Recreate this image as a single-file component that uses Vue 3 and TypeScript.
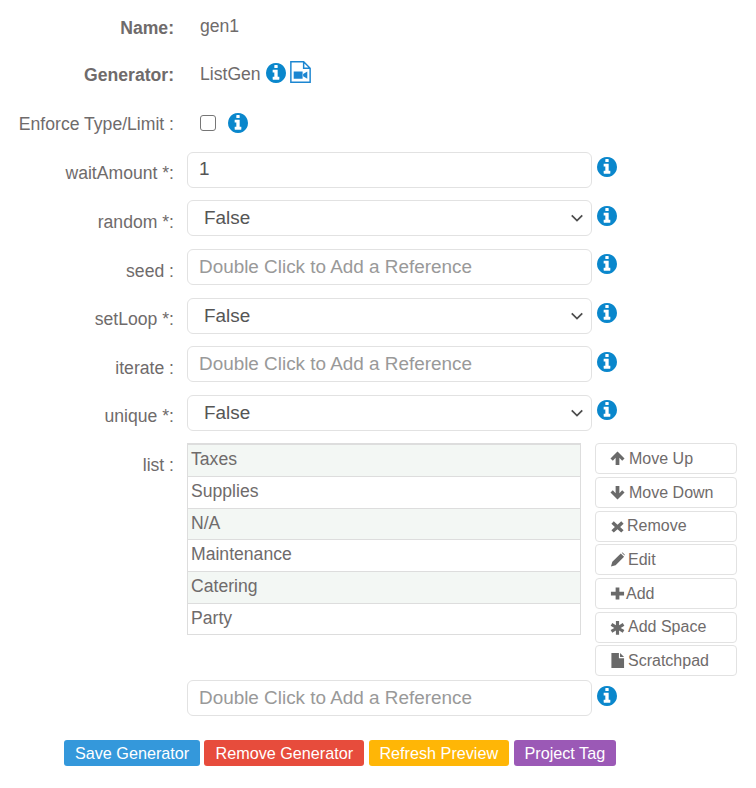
<script setup lang="ts">
type Field = { label: string; kind: 'text' | 'select' | 'ref'; value?: string }

const fields: Field[] = [
  { label: 'waitAmount *:', kind: 'text', value: '1' },
  { label: 'random *:', kind: 'select', value: 'False' },
  { label: 'seed :', kind: 'ref' },
  { label: 'setLoop *:', kind: 'select', value: 'False' },
  { label: 'iterate :', kind: 'ref' },
  { label: 'unique *:', kind: 'select', value: 'False' },
]

const items = ['Taxes', 'Supplies', 'N/A', 'Maintenance', 'Catering', 'Party']

const tools = [
  { name: 'Move Up', icon: 'up' },
  { name: 'Move Down', icon: 'down' },
  { name: 'Remove', icon: 'x' },
  { name: 'Edit', icon: 'pencil' },
  { name: 'Add', icon: 'plus' },
  { name: 'Add Space', icon: 'star' },
  { name: 'Scratchpad', icon: 'file' },
]

const toolPaths: Record<string, string> = {
  up: 'M8 0.5 L15.5 8 L13 10.3 L10 7.3 V15 H6 V7.3 L3 10.3 L0.5 8 Z',
  down: 'M8 15.5 L15.5 8 L13 5.7 L10 8.7 V1 H6 V8.7 L3 5.7 L0.5 8 Z',
  x: 'M4 2.5 L8 6 L12 2.5 L14.5 5 L10.8 8.5 L14.5 12 L12 14.5 L8 11 L4 14.5 L1.5 12 L5.2 8.5 L1.5 5 Z',
  pencil: 'M11.5 1.5 L15 5 L6 14 L1 15.5 L2.5 10.5 Z M12.5 0.8 L13.5 0.5 L15.8 2.8 L15.5 3.8 Z',
  plus: 'M6 1.5 H10 V6 H15 V10 H10 V14.5 H6 V10 H1 V6 H6 Z',
  star: 'M6.3 1 H9.7 V5.5 L13.6 3.2 L15.3 6.1 L11.4 8.4 L15.3 10.7 L13.6 13.6 L9.7 11.3 V15.8 H6.3 V11.3 L2.4 13.6 L0.7 10.7 L4.6 8.4 L0.7 6.1 L2.4 3.2 L6.3 5.5 Z',
  file: 'M1.5 0 H9.5 V5.5 H15 V16 H1.5 Z M10.7 0 L15 4.3 H10.7 Z',
}

const infoPath =
  'M1152 1376v-160q0-14-9-23t-23-9h-96v-512q0-14-9-23t-23-9h-320q-14 0-23 9t-9 23v160q0 14 9 23t23 9h96v320h-96q-14 0-23 9t-9 23v160q0 14 9 23t23 9h448q14 0 23-9t9-23zm-128-896v-160q0-14-9-23t-23-9h-192q-14 0-23 9t-9 23v160q0 14 9 23t23 9h192q14 0 23-9t9-23zm640 416q0 209-103 385.5t-279.5 279.5-385.5 103-385.5-103-279.5-279.5-103-385.5 103-385.5 279.5-279.5 385.5-103 385.5 103 279.5 279.5 103 385.5z'
</script>

<template>
  <div class="page">
    <div class="row head">
      <label class="label strong">Name:</label>
      <div class="plain">gen1</div>
    </div>
    <div class="row head">
      <label class="label strong">Generator:</label>
      <div class="plain gen">
        ListGen
        <svg class="info inline" viewBox="128 128 1536 1536"><path :d="infoPath" /></svg>
        <svg class="video" viewBox="0 0 20 21">
          <path d="M0.8 0.8 H13 L19.2 7 V20.2 H0.8 Z M13 0.8 V7 H19.2" fill="none" stroke="#1c86d1" stroke-width="1.4" />
          <path d="M3.5 10 H12 V17 H3.5 Z M12.5 12.5 L16.5 10 V17 L12.5 14.5 Z" fill="#1c86d1" />
        </svg>
      </div>
    </div>
    <div class="row head">
      <label class="label enforce">Enforce Type/Limit :</label>
      <div class="plain check">
        <span class="box"></span>
        <svg class="info" viewBox="128 128 1536 1536"><path :d="infoPath" /></svg>
      </div>
    </div>

    <div v-for="f in fields" :key="f.label" class="row">
      <label class="label">{{ f.label }}</label>
      <div class="control" :class="f.kind">
        <span v-if="f.kind === 'ref'" class="holder">Double Click to Add a Reference</span>
        <span v-else>{{ f.value }}</span>
        <svg v-if="f.kind === 'select'" class="caret" viewBox="0 0 16 16">
          <path d="M2 5 L8 11 L14 5" fill="none" stroke="#4d4d4d" stroke-width="2" />
        </svg>
      </div>
      <svg class="info side" viewBox="128 128 1536 1536"><path :d="infoPath" /></svg>
    </div>

    <div class="list-row">
      <label class="label">list :</label>
      <div class="list">
        <div v-for="(item, i) in items" :key="item" class="item" :class="{ odd: i % 2 === 0 }">{{ item }}</div>
      </div>
      <div class="tools">
        <button v-for="t in tools" :key="t.name" class="tool" :class="t.icon">
          <svg class="tool-icon" viewBox="0 0 16 16"><path :d="toolPaths[t.icon]" /></svg>
          {{ t.name }}
        </button>
      </div>
    </div>

    <div class="row last">
      <span class="label"></span>
      <div class="control ref"><span class="holder">Double Click to Add a Reference</span></div>
      <svg class="info side" viewBox="128 128 1536 1536"><path :d="infoPath" /></svg>
    </div>

    <div class="actions">
      <button class="act blue">Save Generator</button>
      <button class="act red">Remove Generator</button>
      <button class="act amber">Refresh Preview</button>
      <button class="act purple">Project Tag</button>
    </div>
  </div>
</template>

<style scoped>
.page {
  width: 756px;
  height: 788px;
  padding-top: 6px;
  box-sizing: border-box;
  font-family: 'Liberation Sans', Arial, sans-serif;
  font-size: 17.6px;
  color: #6f6b6b;
}

.row {
  display: grid;
  grid-template-columns: 174px 405px 24px;
  column-gap: 13px;
  height: 36px;
  margin-bottom: 12.6px;
}

.row > .info.side {
  margin-left: -8px;
}

.label {
  text-align: right;
  padding-top: 12.6px;
  line-height: 18px;
  white-space: nowrap;
}

.head .label {
  padding-top: 11px;
}

.head .label.enforce {
  padding-top: 12px;
}

.head:first-child .label {
  padding-top: 13px;
}

.strong {
  font-weight: 700;
}

.plain {
  line-height: 18px;
  padding-top: 11px;
  padding-left: 13px;
  white-space: nowrap;
  display: flex;
  align-items: center;
  height: 18px;
}

.plain.gen {
  padding-top: 10px;
}

.info {
  width: 20px;
  height: 20px;
  fill: #0a87cc;
  flex: none;
}

.info.inline {
  margin-left: 5px;
  margin-top: -2px;
}

.video {
  width: 21px;
  height: 22px;
  margin-left: 4px;
  margin-top: -3px;
  flex: none;
}

.box {
  width: 14px;
  height: 14px;
  border: 1px solid #767676;
  border-radius: 3px;
  margin-right: 12px;
  flex: none;
}

.control {
  height: 36px;
  box-sizing: border-box;
  border: 1px solid #e2e2e2;
  border-radius: 6px;
  display: flex;
  align-items: center;
  justify-content: space-between;
  padding: 0 11px;
  font-size: 18.9px;
  color: #555;
  background: #fff;
}

.control.text {
  padding-bottom: 2px;
}

.control.select {
  padding-left: 16px;
  padding-right: 7px;
}

.holder {
  color: #999;
}

.caret {
  width: 14px;
  height: 14px;
}

.side {
  margin-top: 5.5px;
}

.list-row {
  display: grid;
  grid-template-columns: 174px 394px 143px;
  column-gap: 13px;
  height: 237px;
}

.list-row .label {
  padding-top: 13px;
}

.list {
  align-self: start;
  border: 1px solid #ddd;
  border-top-width: 2px;
}

.item {
  height: 30.7px;
  line-height: 28px;
  padding-left: 3px;
  border-bottom: 1px solid #ddd;
  font-size: 17.6px;
}

.item:last-child {
  border-bottom: 0;
}

.item.odd {
  background: #f3f7f4;
}

.tools {
  display: flex;
  flex-direction: column;
  gap: 2.7px;
  margin-left: 1px;
}

.tool {
  height: 31px;
  display: flex;
  align-items: center;
  gap: 4px;
  padding: 0 14px;
  border: 1px solid #e2e2e2;
  border-radius: 4px;
  background: #fff;
  font: 16px 'Liberation Sans', Arial, sans-serif;
  color: #6f6b6b;
}

.tool-icon {
  width: 15px;
  height: 15px;
  fill: #6a6a6a;
  flex: none;
}

.tool.x { gap: 2px; }
.tool.plus { gap: 1px; }
.tool.pencil, .tool.star, .tool.file { gap: 3px; }

.last {
  margin-bottom: 24px;
}

.actions {
  display: flex;
  padding-left: 64px;
  gap: 4.5px;
}

.act {
  height: 26px;
  padding: 0 10.9px;
  border: 0;
  border-radius: 3px;
  color: #fff;
  font: 16.2px 'Liberation Sans', Arial, sans-serif;
}

.red {
  margin-left: -1px;
  padding-left: 11.9px;
}

.blue { background: #3498db; }
.red { background: #e74c3c; }
.amber { background: #ffb606; }
.purple { background: #9b59b6; }
</style>
